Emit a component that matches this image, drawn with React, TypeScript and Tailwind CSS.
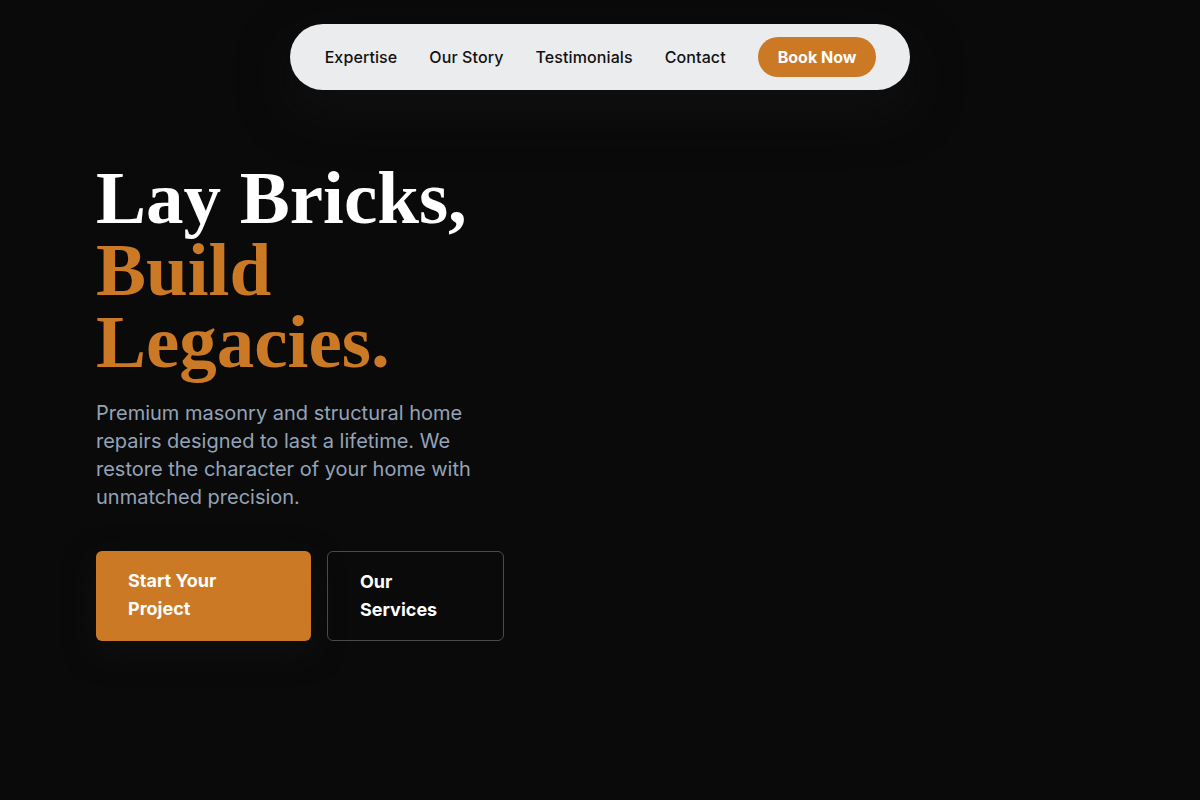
const links = ["Expertise", "Our Story", "Testimonials", "Contact"]

export default function App() {
  return (
    <div className="min-h-[800px] bg-[#0a0a0a] font-['Inter',sans-serif] antialiased">
      <header className="flex justify-center pt-6">
        <nav className="flex items-center gap-8 rounded-full bg-[#ebecee] py-[13px] pl-[35px] pr-[34px] shadow-[0_20px_50px_rgba(18,18,18,0.8)]">
          {links.map((l) => (
            <a key={l} href="#" className="text-base font-medium tracking-[0.1px] text-[#111111]">
              {l}
            </a>
          ))}
          <a
            href="#"
            className="rounded-full bg-[#cc7925] px-5 py-2 text-base font-bold leading-6 text-white"
          >
            Book Now
          </a>
        </nav>
      </header>

      <section className="px-24 pt-[72px]">
        <div className="w-[408px]">
          <h1 className="font-['Liberation_Serif',serif] text-[75px] font-bold leading-[72px] text-white">
            Lay Bricks,
            <br />
            <span className="text-[#cc7925]">
              Build
              <br />
              Legacies.
            </span>
          </h1>
          <p className="mt-[21px] text-xl leading-7 text-[#94a3b8]">
            Premium masonry and structural home repairs designed to last a lifetime. We restore the
            character of your home with unmatched precision.
          </p>
          <div className="mt-10 flex gap-4">
            <a
              href="#"
              className="w-[215px] rounded-md bg-[#cc7925] px-8 py-4 text-lg font-bold leading-7 text-white shadow-[0_10px_30px_rgba(18,18,18,0.7)]"
            >
              Start Your
              <br />
              Project
            </a>
            <a
              href="#"
              className="w-[177px] rounded-md border border-[#4a4a4a] px-8 py-4 text-lg font-bold leading-7 text-white"
            >
              Our
              <br />
              Services
            </a>
          </div>
        </div>
      </section>
    </div>
  )
}
